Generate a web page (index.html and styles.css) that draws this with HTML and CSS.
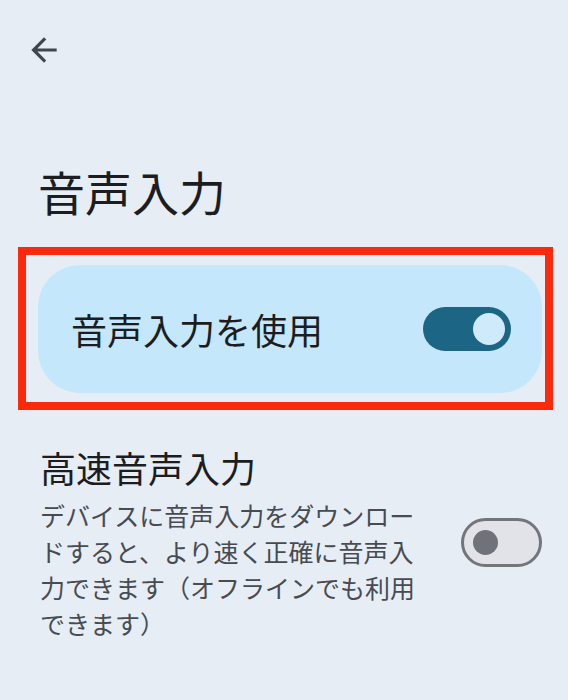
FILE: index.html
```html
<!DOCTYPE html>
<html lang="ja">
<head>
    <meta charset="UTF-8">
    <meta name="viewport" content="width=device-width, initial-scale=1.0">
    <title>音声入力</title>
    <link rel="stylesheet" href="styles.css">
</head>
<body>

<!-- 上部バー -->
<div class="top-bar">
    <span class="back-btn">
        <svg viewBox="0 0 24 24" width="38" height="38">
            <path d="M20 11H7.83l5.59-5.59L12 4l-8 8 8 8 1.41-1.41L7.83 13H20v-2z" fill="#40464c"/>
        </svg>
    </span>
</div>

<h1 class="page-title">音声入力</h1>

<!-- 赤枠で囲んだ設定 -->
<div class="highlight">
    <div class="setting-card">
        <span class="card-label">音声入力を使用</span>
        <span class="switch on"><span class="thumb"></span></span>
    </div>
</div>

<div class="setting-row">
    <div class="setting-text">
        <div class="setting-title">高速音声入力</div>
        <div class="setting-desc">デバイスに音声入力をダウンロードすると、より速く正確に音声入力できます（オフラインでも利用できます）</div>
    </div>
    <span class="switch off"><span class="thumb"></span></span>
</div>

</body>
</html>
```

FILE: styles.css
```css
body {
    margin: 0;
    background-color: #e6edf5;
    font-family: "Noto Sans CJK JP", "Noto Sans", sans-serif;
    color: #1c1d21;
}
.top-bar {
    padding: 31px 0 0 25px;
    height: 38px;
}
.back-btn {
    display: block;
    width: 38px;
    height: 38px;
}
.back-btn svg {
    display: block;
}
.page-title {
    margin: 94px 0 0 38px;
    font-size: 47px;
    line-height: 56px;
    font-weight: 400;
}
.highlight {
    margin: 28px 15px 0 18px;
    border: 8px solid #fb2a0c;
    padding: 10px 3px 9px 12px;
}
.setting-card {
    height: 128px;
    box-sizing: border-box;
    padding: 0 31px 0 33px;
    background-color: #c4e7fb;
    border-radius: 42px;
    display: flex;
    align-items: center;
    justify-content: space-between;
}
.card-label {
    font-size: 36px;
    line-height: 46px;
}
.switch {
    display: flex;
    align-items: center;
    box-sizing: border-box;
    border-radius: 30px;
    flex-shrink: 0;
}
.switch .thumb {
    display: block;
    border-radius: 50%;
}
.switch.on {
    width: 88px;
    height: 44px;
    background-color: #1d6584;
    justify-content: flex-end;
    padding-right: 6px;
}
.switch.on .thumb {
    width: 32px;
    height: 32px;
    background-color: #cfeafa;
}
.switch.off {
    width: 81px;
    height: 49px;
    border: 3px solid #72767b;
    background-color: #e1e3e8;
    padding-left: 9px;
}
.switch.off .thumb {
    width: 25px;
    height: 25px;
    background-color: #6f7279;
}
.setting-row {
    margin-top: 34px;
    padding: 0 26px 0 40px;
    display: flex;
    align-items: center;
    gap: 36px;
}
.setting-text {
    flex: 1;
}
.setting-title {
    font-size: 36px;
    line-height: 46px;
}
.setting-desc {
    margin-top: 7px;
    font-size: 25px;
    line-height: 36px;
    color: #474b52;
}
```
